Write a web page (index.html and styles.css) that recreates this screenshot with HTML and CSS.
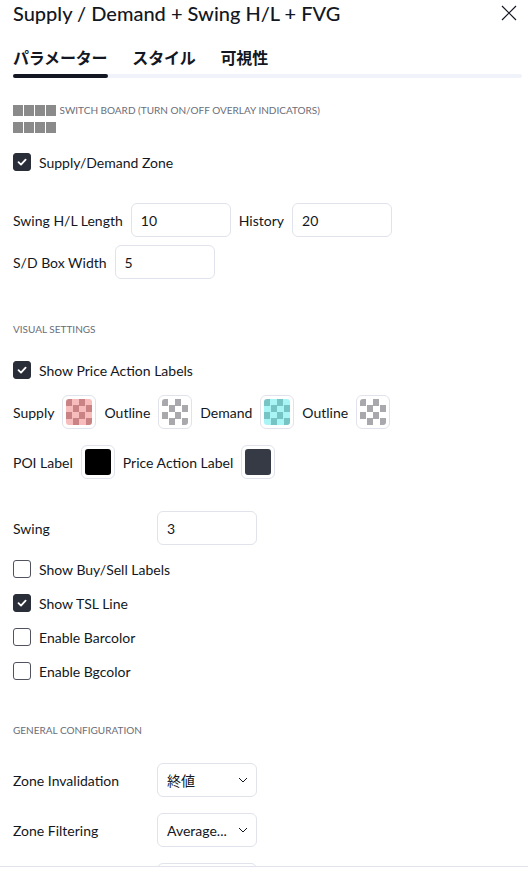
FILE: index.html
```html
<!DOCTYPE html>
<html lang="ja">
<head>
<meta charset="utf-8">
<title>Supply / Demand + Swing H/L + FVG</title>
<link rel="stylesheet" href="styles.css">
</head>
<body>
<div class="dialog">
  <header class="header">
    <h1 class="title">Supply / Demand + Swing H/L + FVG</h1>
    <button class="close" aria-label="close">
      <svg width="16" height="16" viewBox="0 0 16 16"><path d="M1 1 L15 15 M15 1 L1 15" stroke="#131722" stroke-width="1.2" fill="none"/></svg>
    </button>
  </header>
  <nav class="tabs">
    <div class="tab-list">
      <span class="tab active">パラメーター</span>
      <span class="tab">スタイル</span>
      <span class="tab">可視性</span>
    </div>
    <div class="track"><div class="indicator"></div></div>
  </nav>
  <main class="content">
    <div class="section-title first"><span class="tofu"></span><span class="tofu"></span><span class="tofu"></span><span class="tofu"></span> SWITCH BOARD (TURN ON/OFF OVERLAY INDICATORS)<br><span class="tofu"></span><span class="tofu"></span><span class="tofu"></span><span class="tofu"></span></div>

    <label class="check-row mt9"><span class="box checked"><svg width="12" height="12" viewBox="0 0 12 12"><path d="M2.5 6.2 L5 8.6 L9.6 3.6" stroke="#fff" stroke-width="1.8" fill="none" stroke-linecap="round" stroke-linejoin="round"/></svg></span>Supply/Demand Zone</label>

    <div class="row mt24"><span class="label">Swing H/L Length</span><span class="input">10</span><span class="label">History</span><span class="input">20</span></div>
    <div class="row mt8"><span class="label">S/D Box Width</span><span class="input">5</span></div>

    <div class="section-title mt42">VISUAL SETTINGS</div>

    <label class="check-row mt15"><span class="box checked"><svg width="12" height="12" viewBox="0 0 12 12"><path d="M2.5 6.2 L5 8.6 L9.6 3.6" stroke="#fff" stroke-width="1.8" fill="none" stroke-linecap="round" stroke-linejoin="round"/></svg></span>Show Price Action Labels</label>

    <div class="row mt8">
      <span class="label">Supply</span><span class="swatch"><span class="fill checker red"></span></span>
      <span class="label">Outline</span><span class="swatch"><span class="fill checker grey"></span></span>
      <span class="label">Demand</span><span class="swatch"><span class="fill checker cyan"></span></span>
      <span class="label">Outline</span><span class="swatch"><span class="fill checker grey"></span></span>
    </div>
    <div class="row mt16">
      <span class="label">POI Label</span><span class="swatch"><span class="fill black"></span></span>
      <span class="label">Price Action Label</span><span class="swatch"><span class="fill slate"></span></span>
    </div>

    <div class="row mt32"><span class="label fixed">Swing</span><span class="input">3</span></div>

    <label class="check-row mt7"><span class="box"></span>Show Buy/Sell Labels</label>
    <label class="check-row"><span class="box checked"><svg width="12" height="12" viewBox="0 0 12 12"><path d="M2.5 6.2 L5 8.6 L9.6 3.6" stroke="#fff" stroke-width="1.8" fill="none" stroke-linecap="round" stroke-linejoin="round"/></svg></span>Show TSL Line</label>
    <label class="check-row"><span class="box"></span>Enable Barcolor</label>
    <label class="check-row"><span class="box"></span>Enable Bgcolor</label>

    <div class="section-title mt34">GENERAL CONFIGURATION</div>

    <div class="row mt24"><span class="label fixed">Zone Invalidation</span><span class="select"><span class="val">終値</span><svg class="chev" width="10" height="6" viewBox="0 0 10 6"><path d="M1 1 L5 5 L9 1" stroke="#131722" stroke-width="1" fill="none"/></svg></span></div>
    <div class="row mt16"><span class="label fixed">Zone Filtering</span><span class="select"><span class="val">Average...</span><svg class="chev" width="10" height="6" viewBox="0 0 10 6"><path d="M1 1 L5 5 L9 1" stroke="#131722" stroke-width="1" fill="none"/></svg></span></div>
    <div class="row mt16"><span class="label fixed">&nbsp;</span><span class="select"></span></div>
  </main>
  <footer class="footer"></footer>
</div>
</body>
</html>
```

FILE: styles.css
```css
* { box-sizing: border-box; }
html, body { margin: 0; padding: 0; background: #fff; }
body {
  font-family: Lato, "Noto Sans CJK JP", sans-serif;
  color: #131722;
  font-size: 14px;
}
.dialog {
  width: 528px;
  height: 881px;
  display: flex;
  flex-direction: column;
  overflow: hidden;
}
.header {
  height: 26px;
  display: flex;
  align-items: center;
  justify-content: space-between;
  padding: 0 11px 0 13px;
  flex: none;
}
.title {
  margin: 0;
  font-size: 20px;
  font-weight: 500;
  line-height: 26px;
  white-space: nowrap;
}
.close {
  border: 0;
  background: none;
  padding: 0;
  width: 16px;
  height: 16px;
  display: flex;
}
.tabs {
  flex: none;
  padding: 19px 6px 0 13px;
}
.tab-list {
  display: flex;
  gap: 25px;
  height: 24px;
  align-items: center;
}
.tab {
  font-family: "Noto Sans CJK JP", sans-serif;
  font-size: 16px;
  font-weight: 700;
  line-height: 24px;
  letter-spacing: -0.2px;
}
.track {
  margin-top: 5px;
  height: 4px;
  background: #f0f3fa;
  border-radius: 2px;
}
.indicator {
  width: 95px;
  height: 4px;
  background: #131722;
  border-radius: 2px;
}
.content {
  flex: 1;
  overflow: hidden;
  padding: 0 13px;
  display: flex;
  flex-direction: column;
}
.footer {
  flex: none;
  height: 15px;
  border-top: 1px solid #e0e3eb;
}
.section-title {
  font-size: 10px;
  line-height: 17px;
  color: #6a6d78;
  text-transform: uppercase;
  white-space: nowrap;
}
.section-title.first { margin-top: 24px; }
.tofu {
  display: inline-block;
  width: 10px;
  height: 11px;
  background: #8a8a8a;
  margin-right: 1px;
  vertical-align: -2px;
}
.mt7 { margin-top: 7px; }
.mt8 { margin-top: 8px; }
.mt9 { margin-top: 9px; }
.mt15 { margin-top: 15px; }
.mt16 { margin-top: 16px; }
.mt24 { margin-top: 24px; }
.mt32 { margin-top: 32px; }
.mt34 { margin-top: 34px; }
.mt42 { margin-top: 42px; }
.check-row {
  display: flex;
  align-items: center;
  gap: 8px;
  height: 34px;
  flex: none;
  white-space: nowrap;
}
.box {
  width: 18px;
  height: 18px;
  border: 1px solid #50535e;
  border-radius: 3px;
  display: flex;
  align-items: center;
  justify-content: center;
  flex: none;
}
.box.checked {
  background: #2a2e39;
  border-color: #2a2e39;
}
.row {
  display: flex;
  align-items: center;
  gap: 8px;
  height: 34px;
  flex: none;
  white-space: nowrap;
}
.label.fixed { width: 136px; }
.input, .select {
  width: 100px;
  height: 34px;
  border: 1px solid #e0e3eb;
  border-radius: 6px;
  padding: 0 9px;
  display: flex;
  align-items: center;
  flex: none;
}
.select { justify-content: space-between; padding-right: 8px; }
.chev { flex: none; }
.swatch {
  width: 34px;
  height: 34px;
  border: 1px solid #e0e3eb;
  border-radius: 6px;
  display: flex;
  align-items: center;
  justify-content: center;
  flex: none;
}
.fill {
  width: 26px;
  height: 26px;
  border-radius: 3px;
}
.fill.black { background: #000; }
.fill.slate { background: #363a45; }
.checker {
  background-size: 13px 13px;
  background-position: 0 0;
}
.checker.red {
  background-image: conic-gradient(#f7bcbc 25%, #c98385 0 50%, #f7bcbc 0 75%, #c98385 0);
}
.checker.cyan {
  background-image: conic-gradient(#a9f5f5 25%, #77c4c4 0 50%, #a9f5f5 0 75%, #77c4c4 0);
}
.checker.grey {
  background-image: conic-gradient(#ffffff 25%, #a8a8ad 0 50%, #ffffff 0 75%, #a8a8ad 0);
}
```
